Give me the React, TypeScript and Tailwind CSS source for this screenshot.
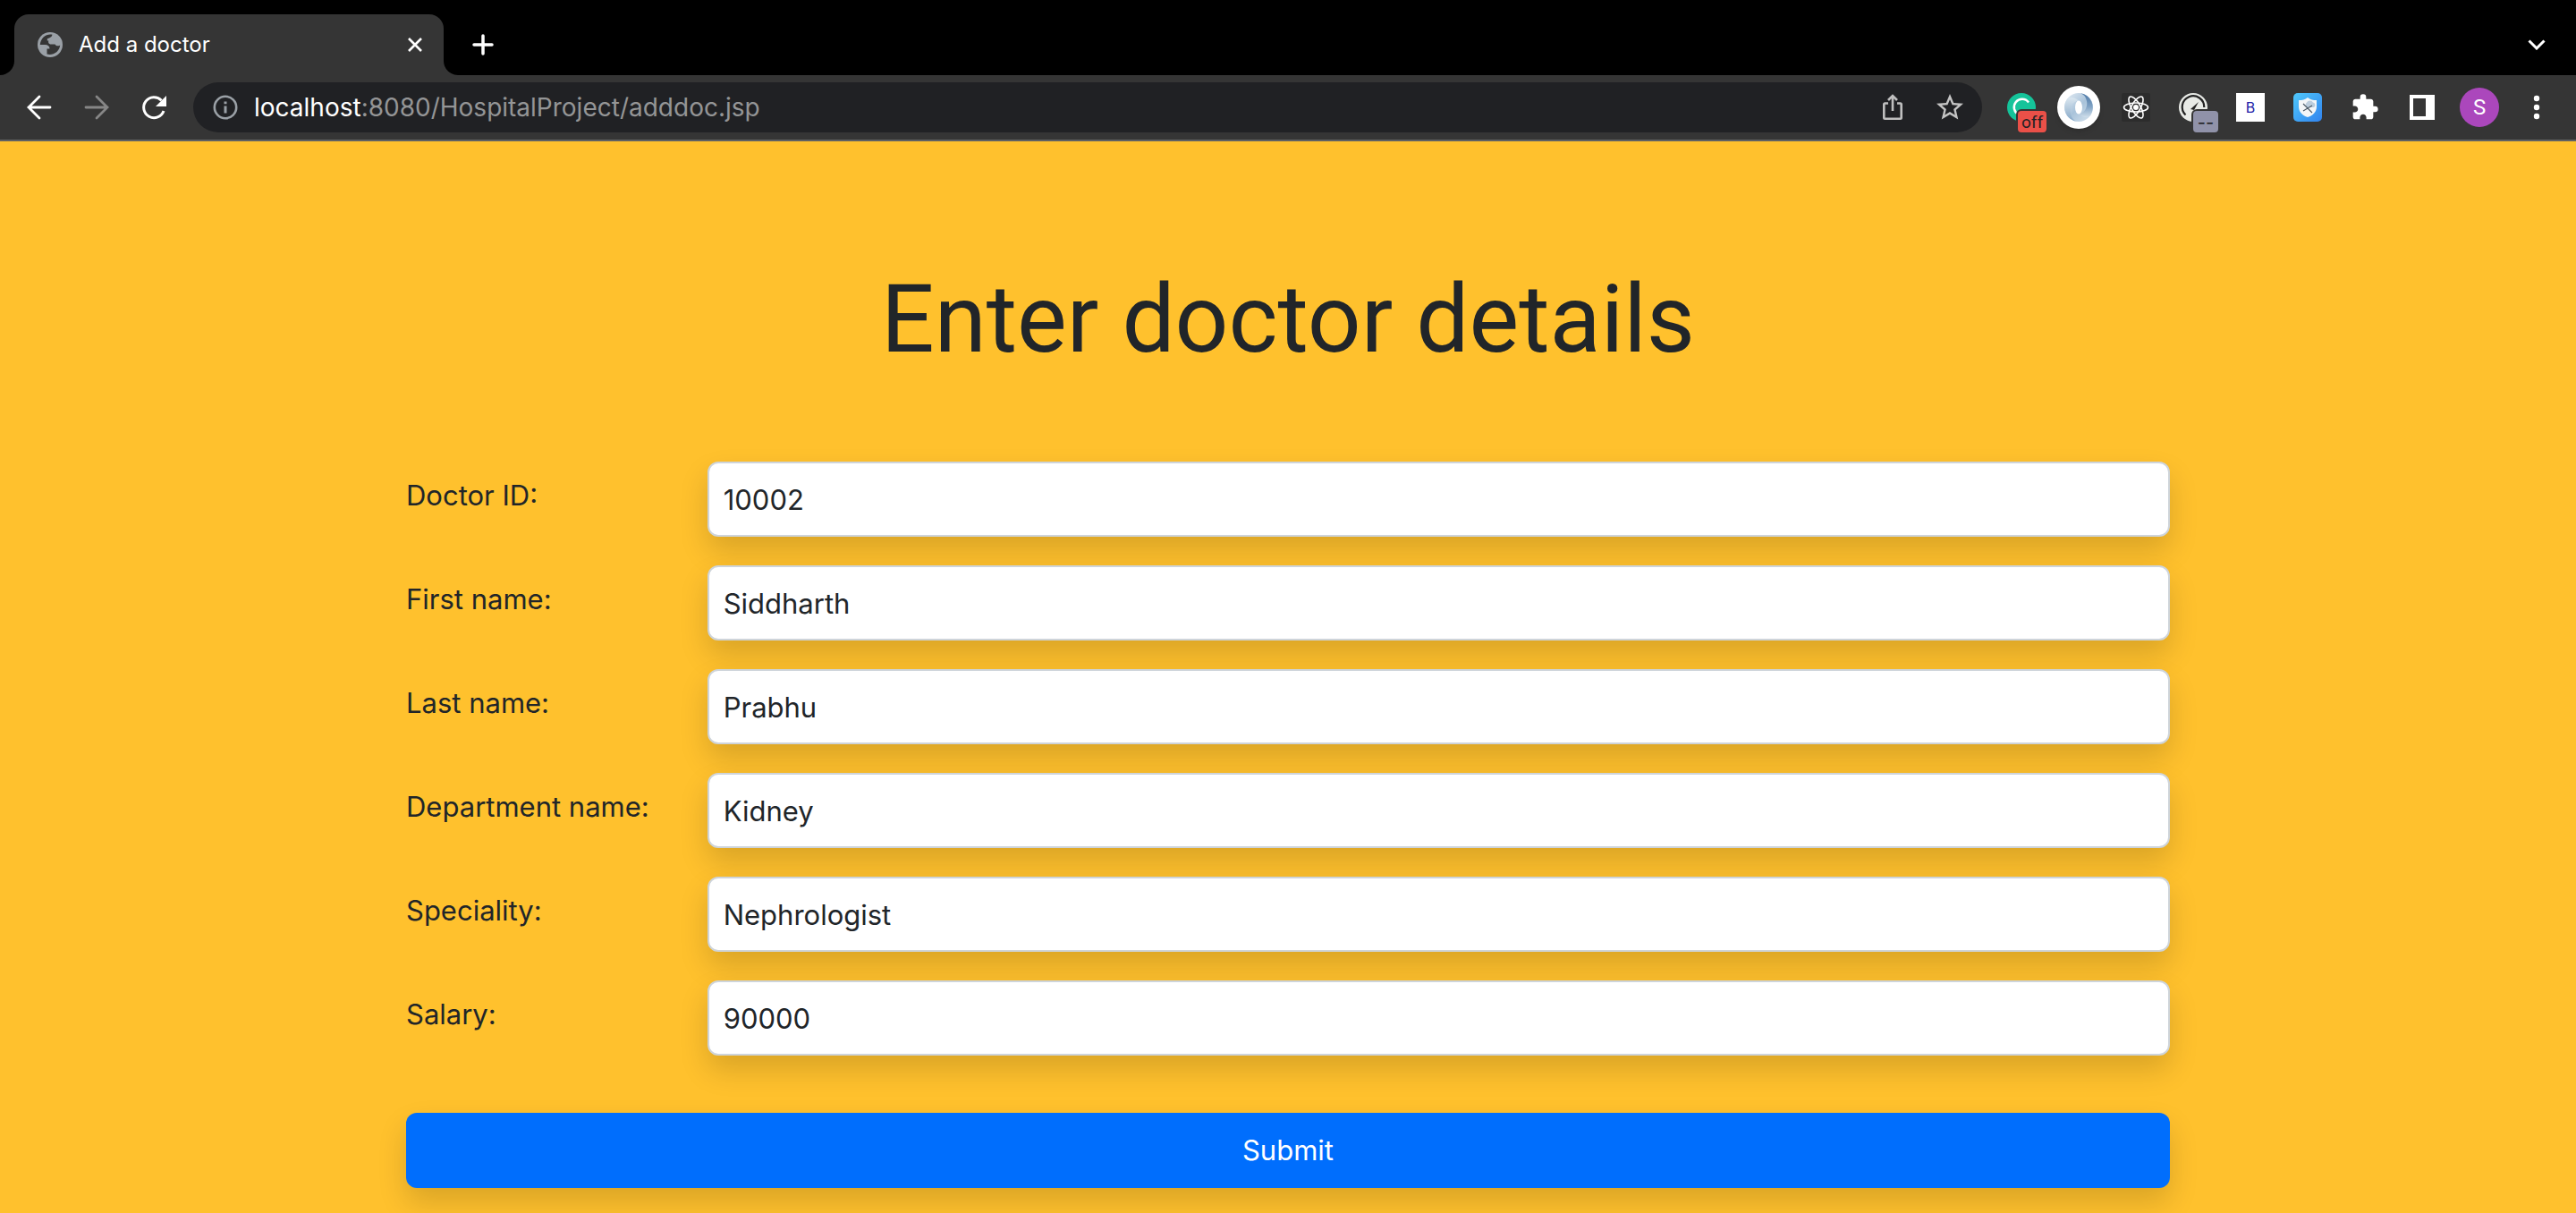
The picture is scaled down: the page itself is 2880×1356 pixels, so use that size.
import React from "react";

const fields = [
  { id: "docid", label: "Doctor ID:", value: "10002" },
  { id: "fname", label: "First name:", value: "Siddharth" },
  { id: "lname", label: "Last name:", value: "Prabhu" },
  { id: "dept", label: "Department name:", value: "Kidney" },
  { id: "spec", label: "Speciality:", value: "Nephrologist" },
  { id: "salary", label: "Salary:", value: "90000" },
];

function IconButton({ label, children }: { label: string; children: React.ReactNode }) {
  return (
    <button type="button" aria-label={label} className="flex size-16 shrink-0 items-center justify-center">
      {children}
    </button>
  );
}

function GlobeIcon() {
  return (
    <svg viewBox="0 0 32 32" className="size-8 shrink-0">
      <circle cx="16" cy="16" r="14" fill="#9aa0a6" />
      <path
        d="M18.5 4.8C12 3.5 5.5 8 4.8 16H10.5C13.5 16 15.5 17.5 15.5 20.5H12.5V26.6C19 28.5 26.5 24 27.2 16.5C25.5 18 22.5 17.5 21.5 15.5H17C14.5 15.5 13.5 13 14.5 11.5H12.8V9.5C14.5 8.5 17.5 8.5 18.5 4.8Z"
        fill="#353535"
      />
    </svg>
  );
}

function TabStrip() {
  return (
    <div className="flex h-[84px] items-end bg-black">
      <div className="size-4 bg-[#353535]">
        <div className="size-4 rounded-br-2xl bg-black" />
      </div>
      <div className="flex h-[68px] w-[480px] items-center rounded-t-2xl bg-[#353535] pr-4 pl-6">
        <GlobeIcon />
        <span className="ml-4 flex-1 text-2xl text-white">Add a doctor</span>
        <button type="button" aria-label="Close tab" className="flex size-8 items-center justify-center">
          <svg viewBox="0 0 16 16" className="size-4" fill="none" stroke="#fff" strokeWidth="2.6">
            <path d="M1 1L15 15M15 1L1 15" />
          </svg>
        </button>
      </div>
      <div className="size-4 bg-[#353535]">
        <div className="size-4 rounded-bl-2xl bg-black" />
      </div>
      <button type="button" aria-label="New tab" className="flex h-[68px] w-14 items-center justify-center">
        <svg viewBox="0 0 24 24" className="size-6" fill="none" stroke="#fff" strokeWidth="3.5" strokeLinecap="round">
          <path d="M12 2V22M2 12H22" />
        </svg>
      </button>
      <button type="button" aria-label="Search tabs" className="mr-3 ml-auto flex h-[68px] w-16 items-center justify-center">
        <svg viewBox="0 0 20 12" className="h-3 w-5" fill="none" stroke="#fff" strokeWidth="3">
          <path d="M1.5 1.5L10 10L18.5 1.5" />
        </svg>
      </button>
    </div>
  );
}

function Toolbar() {
  return (
    <div className="flex h-[74px] items-center border-b-2 border-[#5f6163] bg-[#353535] px-3">
      <IconButton label="Back">
        <svg viewBox="0 0 32 32" className="size-8" fill="none" stroke="#fff" strokeWidth="2.8" strokeLinecap="round">
          <path d="M28 16H4M16 4L4 16L16 28" />
        </svg>
      </IconButton>
      <IconButton label="Forward">
        <svg viewBox="0 0 32 32" className="size-8" fill="none" stroke="#868686" strokeWidth="2.8" strokeLinecap="round">
          <path d="M4 16H28M16 4L28 16L16 28" />
        </svg>
      </IconButton>
      <IconButton label="Reload">
        <svg viewBox="0 0 32 32" className="size-8" fill="none">
          <path d="M27 20A11.5 11.5 0 1 1 24.5 8.2" stroke="#fff" strokeWidth="3" />
          <path d="M30 3V15H18Z" fill="#fff" />
        </svg>
      </IconButton>
      <div className="ml-3 flex h-14 min-w-0 flex-1 items-center rounded-full bg-[#202124] pr-1 pl-[22px]">
        <svg viewBox="0 0 28 28" className="size-7 shrink-0" fill="none" stroke="#9aa0a6" strokeWidth="2.6">
          <circle cx="14" cy="14" r="12.2" />
          <path d="M14 12.5V20.5M14 7.5V10.2" strokeWidth="3" />
        </svg>
        <div className="ml-[18px] flex-1 text-[28px] text-[#949596]">
          <span className="text-white">localhost</span>:8080/HospitalProject/adddoc.jsp
        </div>
        <IconButton label="Share">
          <svg viewBox="0 0 32 32" className="size-8" fill="none" stroke="#bfbfbf" strokeWidth="2.6">
            <path d="M11 11.5H7.5Q6.3 11.5 6.3 12.7V27.5Q6.3 28.7 7.5 28.7H24.5Q25.7 28.7 25.7 27.5V12.7Q25.7 11.5 24.5 11.5H21M16 20V3.5M11 8L16 3L21 8" />
          </svg>
        </IconButton>
        <IconButton label="Bookmark this tab">
          <svg viewBox="0 0 24 24" className="size-9" fill="#c4c4c4">
            <path d="M22 9.24l-7.19-.62L12 2 9.19 8.63 2 9.24l5.46 4.73L5.82 21 12 17.27 18.18 21l-1.63-7.03L22 9.24zM12 15.4l-3.76 2.27 1-4.28-3.32-2.88 4.38-.38L12 6.1l1.71 4.04 4.38.38-3.32 2.88 1 4.28L12 15.4z" />
          </svg>
        </IconButton>
      </div>
      <div className="ml-3 flex items-center">
        <IconButton label="Grammar checker">
          <span className="relative">
            <svg viewBox="0 0 32 32" className="size-8" fill="none">
              <circle cx="16" cy="16" r="16" fill="#15c39a" />
              <path d="M24 10.5A9 9 0 1 0 13 24" stroke="#fff" strokeWidth="2.4" />
            </svg>
            <span className="absolute top-5 left-3 h-6 w-8 rounded bg-[#ea5048] text-center font-[Roboto,sans-serif] text-[19px] leading-[26px] text-[#202124] ring-2 ring-[#353535]">
              off
            </span>
          </span>
        </IconButton>
        <IconButton label="JSON formatter">
          <span className="flex size-12 shrink-0 items-center justify-center rounded-full bg-white shadow-md">
            <svg viewBox="0 0 32 32" className="size-8">
              <defs>
                <linearGradient id="jsonDisc" x1="0" y1="0" x2="1" y2="1">
                  <stop offset="0" stopColor="#e6eef5" />
                  <stop offset="0.5" stopColor="#a9c3da" />
                  <stop offset="1" stopColor="#d9e5ef" />
                </linearGradient>
                <linearGradient id="jsonArm" x1="0" y1="0" x2="0" y2="1">
                  <stop offset="0" stopColor="#4b77a5" />
                  <stop offset="0.55" stopColor="#7fa2c4" />
                  <stop offset="1" stopColor="#cfdeea" />
                </linearGradient>
                <linearGradient id="jsonArmLow" x1="0" y1="0" x2="0" y2="1">
                  <stop offset="0" stopColor="#86a8c8" />
                  <stop offset="1" stopColor="#dbe7f0" />
                </linearGradient>
              </defs>
              <circle cx="16" cy="16" r="16" fill="url(#jsonDisc)" />
              <path d="M18 0.2C28 3 28 22 16 23.500C21 28 27 28 29 25A16 16 0 0 0 18 0.200Z" fill="url(#jsonArm)" />
              <path d="M18 0.2C28 3 28 22 16 23.500C21 28 27 28 29 25A16 16 0 0 0 18 0.200Z" fill="url(#jsonArmLow)" transform="rotate(180 16 16)" />
              <ellipse cx="16" cy="16" rx="4" ry="7.5" fill="#fff" />
            </svg>
          </span>
        </IconButton>
        <IconButton label="React tools">
          <svg viewBox="0 0 32 32" className="size-8" fill="none" stroke="#fff" strokeWidth="1.6">
            <rect width="32" height="32" rx="2" fill="#2c2c2c" stroke="none" />
            <ellipse cx="16" cy="16" rx="13.5" ry="5" />
            <ellipse cx="16" cy="16" rx="13.5" ry="5" transform="rotate(60 16 16)" />
            <ellipse cx="16" cy="16" rx="13.5" ry="5" transform="rotate(120 16 16)" />
            <circle cx="16" cy="16" r="3" fill="#fff" stroke="none" />
          </svg>
        </IconButton>
        <IconButton label="Page speed">
          <span className="relative">
            <svg viewBox="0 0 32 32" className="size-8" fill="none">
              <circle cx="16" cy="16" r="16" fill="#e8eae6" />
              <path d="M7.5 24.5A12.3 12.3 0 1 1 28.3 16" stroke="#222" strokeWidth="2.2" />
              <path d="M13 18L22 10L17 19Z" fill="#222" />
            </svg>
            <span className="absolute top-5 left-4 h-6 w-7 rounded bg-[#9092a9] text-center text-xl leading-[26px] text-[#202124] ring-2 ring-[#353535]">
              --
            </span>
          </span>
        </IconButton>
        <IconButton label="Bootstrap helper">
          <span className="flex size-8 items-center justify-center bg-white text-base text-[#2222a8]">B</span>
        </IconButton>
        <IconButton label="Ad shield">
          <svg viewBox="0 0 32 32" className="size-8" fill="none">
            <defs>
              <linearGradient id="shieldBg" x1="0" y1="0" x2="1" y2="1">
                <stop offset="0" stopColor="#4fc8fb" />
                <stop offset="1" stopColor="#3183ee" />
              </linearGradient>
            </defs>
            <rect width="32" height="32" rx="5" fill="url(#shieldBg)" />
            <path d="M16 5C19 7.5 22 8 26 8V15C26 21 22 25 16 27C10 25 6 21 6 15V8C10 8 13 7.5 16 5Z" fill="#f4f6f8" />
            <path d="M15 16A3.5 3.5 0 0 1 15 10.5A4 4 0 0 1 22 10.5A3 3 0 0 1 23 16Z" fill="#bccddd" />
            <path d="M11 12L21 22M11 20L16 17L21 14" stroke="#4a5865" strokeWidth="1.1" />
          </svg>
        </IconButton>
        <IconButton label="Extensions">
          <svg viewBox="0 0 24 24" className="size-8" fill="#fff">
            <path d="M20.5 11H19V7c0-1.1-.9-2-2-2h-4V3.5a2.5 2.5 0 0 0-5 0V5H4c-1.1 0-1.99.9-1.99 2v3.8H3.5c1.49 0 2.7 1.21 2.7 2.7s-1.21 2.7-2.7 2.7H2V20c0 1.1.9 2 2 2h3.8v-1.5c0-1.49 1.21-2.7 2.7-2.7s2.7 1.21 2.7 2.7V22H17c1.1 0 2-.9 2-2v-4h1.5a2.5 2.5 0 0 0 0-5z" />
          </svg>
        </IconButton>
        <IconButton label="Side panel">
          <svg viewBox="0 0 28 28" className="size-7">
            <path d="M0 0H28V28H0ZM4 4V24H18V4Z" fill="#fff" fillRule="evenodd" />
          </svg>
        </IconButton>
        <IconButton label="Profile">
          <span className="flex size-11 items-center justify-center rounded-full bg-[#ab47bc] font-[Roboto,sans-serif] text-2xl text-white">
            S
          </span>
        </IconButton>
        <IconButton label="Menu">
          <svg viewBox="0 0 28 28" className="size-7" fill="#fff">
            <circle cx="14" cy="4" r="3.2" />
            <circle cx="14" cy="14" r="3.2" />
            <circle cx="14" cy="24" r="3.2" />
          </svg>
        </IconButton>
      </div>
    </div>
  );
}

export default function App() {
  return (
    <div className="min-h-screen bg-[#ffc12d] font-[Inter,sans-serif] text-[#212529]">
      <header>
        <TabStrip />
        <Toolbar />
      </header>
      <main className="mx-auto max-w-[2020px] px-6 pt-[132px] pb-7">
        <h1 className="text-center font-[Roboto,sans-serif] text-[105px] leading-[136px]">Enter doctor details</h1>
        <form className="mt-[90px]" onSubmit={(e) => e.preventDefault()}>
          <div className="flex flex-col gap-8">
            {fields.map((f) => (
              <div key={f.id} className="grid grid-cols-6 gap-x-12">
                <label htmlFor={f.id} className="pt-[14px] text-[31px] leading-[48px] whitespace-nowrap">
                  {f.label}
                </label>
                <input
                  id={f.id}
                  type="text"
                  defaultValue={f.value}
                  className="col-span-5 h-[84px] w-full rounded-xl border-2 border-[#ced4da] bg-white px-4 text-[31px] shadow-[0_16px_32px_rgba(0,0,0,0.15)] outline-none"
                />
              </div>
            ))}
          </div>
          <button
            type="submit"
            className="mt-16 h-[84px] w-full rounded-xl bg-[#006efd] text-[31px] text-white shadow-[0_16px_32px_rgba(0,0,0,0.15)]"
          >
            Submit
          </button>
        </form>
      </main>
    </div>
  );
}
